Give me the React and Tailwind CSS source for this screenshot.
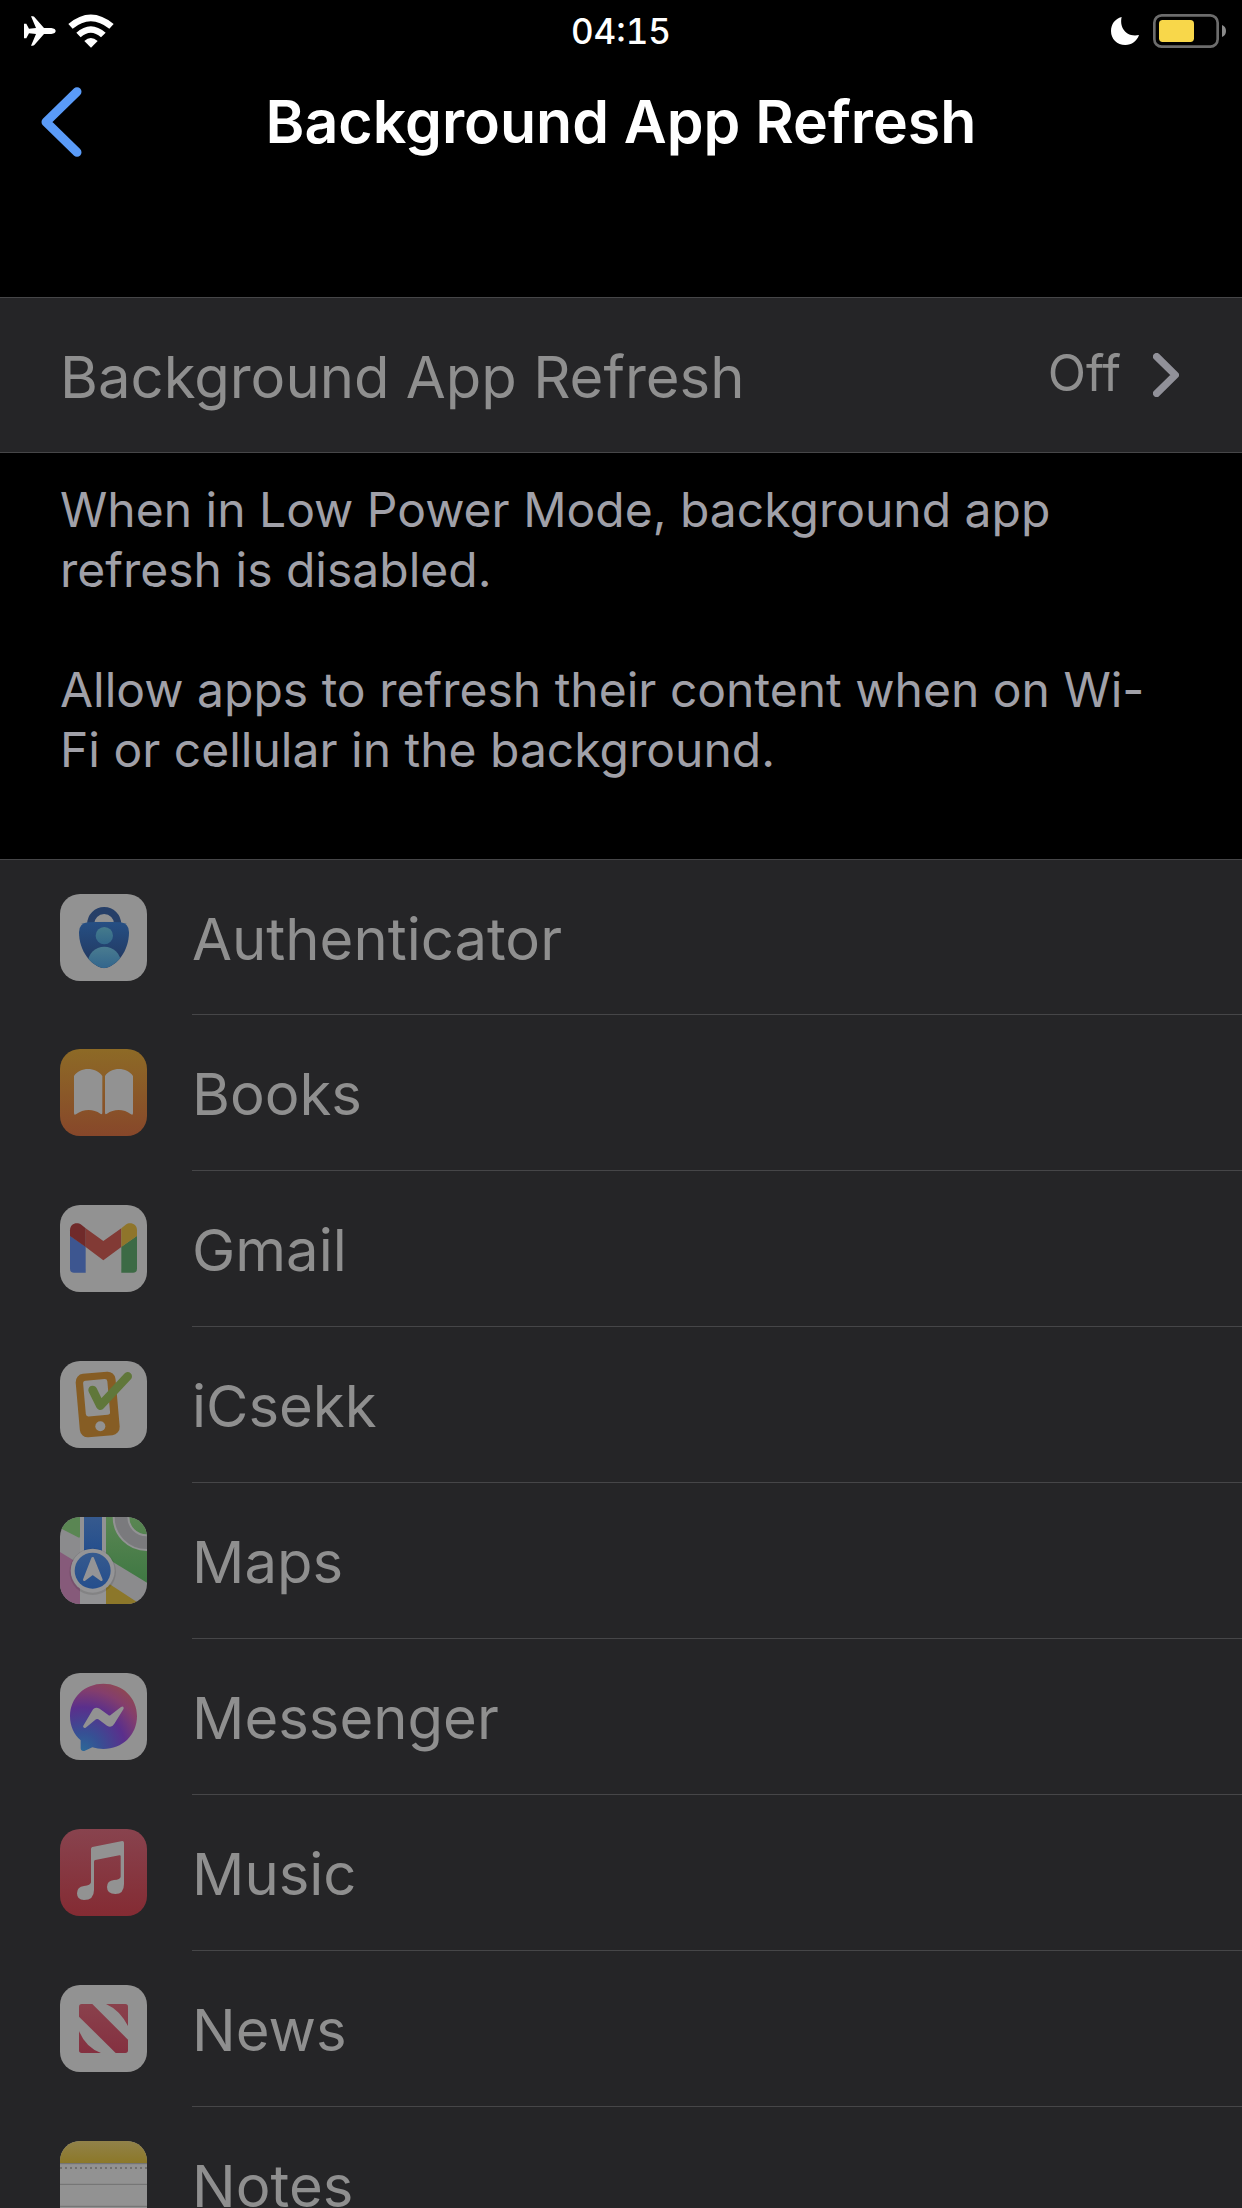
function AuthenticatorIcon() {
    return (
        <>
            <defs>
                <linearGradient id="auth-body" x1="0" y1="0" x2="0" y2="1">
                    <stop offset="0" stopColor="#265085" />
                    <stop offset="0.6" stopColor="#233f6b" />
                    <stop offset="1" stopColor="#203055" />
                </linearGradient>
                <linearGradient id="auth-head" x1="0" y1="0" x2="0" y2="1">
                    <stop offset="0" stopColor="#457b8c" />
                    <stop offset="1" stopColor="#32678a" />
                </linearGradient>
                <linearGradient id="auth-shoulders" gradientUnits="userSpaceOnUse" x1="0" y1="158" x2="0" y2="223">
                    <stop offset="0" stopColor="#4a7c90" />
                    <stop offset="1" stopColor="#32658c" />
                </linearGradient>
                <clipPath id="auth-clip">
                    <path d="M83 85Q132 82 182 85Q207 88 207 115C207 170 172 217 132 223C92 217 57 170 57 115Q57 88 83 85Z" />
                </clipPath>
            </defs>
            <rect width="261" height="261" fill="#929292" />
            <path d="M92 92V90A40 40 0 0 1 173 90V92" fill="none" stroke="#263f68" strokeWidth="21" />
            <g clipPath="url(#auth-clip)">
                <rect x="50" y="80" width="165" height="150" fill="url(#auth-body)" />
                <circle cx="133" cy="125" r="26" fill="url(#auth-head)" />
                <circle cx="133" cy="208" r="50" fill="url(#auth-shoulders)" />
            </g>
        </>
    )
}

function BooksIcon() {
    return (
        <>
            <defs>
                <linearGradient id="books-bg" x1="0" y1="0" x2="0" y2="1">
                    <stop offset="0" stopColor="#8d6a26" />
                    <stop offset="1" stopColor="#87472a" />
                </linearGradient>
            </defs>
            <rect width="261" height="261" fill="url(#books-bg)" />
            <path d="M42 81C60 53 108 53 127 81V191Q127 198 121 194C100 179 70 179 48 196Q42 200 42 192Z" fill="#929292" />
            <path d="M135 81C153 53 201 53 219 81V192Q219 200 213 196C192 179 162 179 141 194Q135 198 135 191Z" fill="#929292" />
        </>
    )
}

function GmailIcon() {
    return (
        <>
            <rect width="261" height="261" fill="#929292" />
            <path d="M30 92L77 125V203H42Q30 203 30 191Z" fill="#3d5690" />
            <path d="M184 125L231 92V191Q231 203 219 203H184Z" fill="#3c6a45" />
            <path d="M77 70L130 108L184 70V126L130 166L77 126Z" fill="#823a35" />
            <path d="M30 93V76C30 56 50 49 64 59L77 70V126Z" fill="#702a2a" />
            <path d="M231 93V76C231 56 210 49 197 59L184 70V126Z" fill="#8f752b" />
        </>
    )
}

function ICsekkIcon() {
    return (
        <>
            <rect width="261" height="261" fill="#929292" />
            <g transform="rotate(-5 113 130)">
                <rect x="53" y="35" width="120" height="191" rx="24" fill="#865d24" />
                <rect x="75" y="56" width="73" height="108" rx="8" fill="#929292" />
            </g>
            <circle cx="121" cy="196" r="15" fill="#929292" />
            <path d="M98 87L121 134L203 46" fill="none" stroke="#60773a" strokeWidth="26" strokeLinecap="round" strokeLinejoin="round" />
        </>
    )
}

function MapsIcon() {
    return (
        <>
            <defs>
                <linearGradient id="maps-green" x1="0" y1="0" x2="0" y2="1">
                    <stop offset="0" stopColor="#5a8653" />
                    <stop offset="1" stopColor="#3f7843" />
                </linearGradient>
                <linearGradient id="maps-blue" x1="0" y1="0" x2="0" y2="1">
                    <stop offset="0" stopColor="#365a8e" />
                    <stop offset="1" stopColor="#244e8d" />
                </linearGradient>
            </defs>
            <rect width="261" height="261" fill="#8b8b8d" />
            <path d="M0 0H60V58Q60 64 54 61L0 33Z" fill="#5a8653" />
            <path d="M138 0H261V197L138 122Z" fill="url(#maps-green)" />
            <path d="M0 105L60 142V261H0Z" fill="#865a7a" />
            <path d="M138 194L232 256V261H138Z" fill="#8c772a" />
            <path d="M60 0H138V261H60Z" fill="#929294" />
            <path d="M72 0H126V110H72Z" fill="url(#maps-blue)" />
            <circle cx="260" cy="0" r="77" fill="none" stroke="#929294" strokeWidth="50" />
            <circle cx="260" cy="0" r="77" fill="none" stroke="#7a7a7d" strokeWidth="38" />
            <circle cx="98" cy="164" r="70" fill="#000" opacity="0.1" />
            <circle cx="98" cy="161" r="66" fill="#949496" />
            <circle cx="98" cy="161" r="54" fill="url(#maps-blue)" />
            <path d="M98 124L124 188L98 169L73 188Z" fill="#949496" stroke="#949496" strokeWidth="8" strokeLinejoin="round" />
        </>
    )
}

function MessengerIcon() {
    return (
        <>
            <defs>
                <radialGradient id="messenger-bg" gradientUnits="userSpaceOnUse" cx="68" cy="232" r="235">
                    <stop offset="0" stopColor="#2c6898" />
                    <stop offset="0.22" stopColor="#365094" />
                    <stop offset="0.55" stopColor="#5a2f8c" />
                    <stop offset="0.78" stopColor="#843e6c" />
                    <stop offset="1" stopColor="#924a4a" />
                </radialGradient>
            </defs>
            <rect width="261" height="261" fill="#929292" />
            <path d="M130 32C74 32 30 73 30 129C30 159 42 184 62 202V226Q63 236 73 234L97 223Q113 228 130 228C187 228 231 186 231 129C231 73 187 32 130 32Z" fill="url(#messenger-bg)" />
            <path d="M69 160L96 114Q104 99 119 107L145 126Q148 129 152 126L183 102Q192 97 191 107L163 152Q155 166 141 158L115 139Q112 137 108 139L77 164Q71 168 69 160Z" fill="#929292" />
        </>
    )
}

function MusicIcon() {
    return (
        <>
            <defs>
                <linearGradient id="music-bg" x1="0" y1="0" x2="0" y2="1">
                    <stop offset="0" stopColor="#88434e" />
                    <stop offset="1" stopColor="#842b33" />
                </linearGradient>
            </defs>
            <rect width="261" height="261" fill="url(#music-bg)" />
            <path d="M97 54L187 36Q192 36 192 41V165Q192 195 166 195Q141 195 141 174Q141 155 162 153Q181 151 182 143V82Q182 78 178 79L106 93Q102 94 102 98V183Q102 213 72 213Q51 213 51 193Q51 173 72 171Q92 169 93 160V60Q93 55 97 54Z" fill="#929292" />
        </>
    )
}

function NewsIcon() {
    return (
        <>
            <defs>
                <linearGradient id="news-red" gradientUnits="userSpaceOnUse" x1="0" y1="57" x2="0" y2="204">
                    <stop offset="0" stopColor="#8a414c" />
                    <stop offset="1" stopColor="#843040" />
                </linearGradient>
            </defs>
            <rect width="261" height="261" fill="#929292" />
            <g fill="url(#news-red)">
                <path d="M65 57H97L204 164V196Q204 204 196 204H167L57 95V65Q57 57 65 57Z" />
                <path d="M138 57H196Q204 57 204 65V123Q179 75 138 57Z" />
                <path d="M57 138Q77 187 123 204H65Q57 204 57 196Z" />
            </g>
        </>
    )
}

function NotesIcon() {
    return (
        <>
            <defs>
                <linearGradient id="notes-top" x1="0" y1="0" x2="0" y2="1">
                    <stop offset="0" stopColor="#91824a" />
                    <stop offset="1" stopColor="#8c7828" />
                </linearGradient>
            </defs>
            <rect width="261" height="261" fill="#929292" />
            <rect width="261" height="66" fill="url(#notes-top)" />
            <path d="M0 68H261M0 130H261M0 196H261" stroke="#707070" strokeWidth="3" />
            <path d="M0 81H261" stroke="#707070" strokeWidth="6" strokeDasharray="6 9" />
        </>
    )
}

const apps = [
    { name: 'Authenticator', Icon: AuthenticatorIcon },
    { name: 'Books', Icon: BooksIcon },
    { name: 'Gmail', Icon: GmailIcon },
    { name: 'iCsekk', Icon: ICsekkIcon },
    { name: 'Maps', Icon: MapsIcon },
    { name: 'Messenger', Icon: MessengerIcon },
    { name: 'Music', Icon: MusicIcon },
    { name: 'News', Icon: NewsIcon },
    { name: 'Notes', Icon: NotesIcon }
]

function StatusBar() {
    return (
        <div className="grid grid-cols-3 items-center h-[62px]">

            {/* CONNECTION */}
            <div className="flex items-center gap-3 pl-6">

                <svg viewBox="0 0 96 90" className="w-8 h-[30px]" fill="#fff" aria-label="Airplane mode">
                    <path d="M60 36H82Q95 38 95 45Q95 52 82 54H60L31 87Q29 89 25 89H21L36 54L15 52L7 67H0V23H7L15 38L36 36L21 1H27Q31 2 33 5Z" />
                </svg>

                <svg viewBox="0 0 138 100" className="w-[46px] h-[34px]" fill="#fff" aria-label="Wi-Fi">
                    <path d="M1 29Q68 -28 137 29L124 43Q68 -2 14 43Z" />
                    <path d="M25 55Q68 16 113 55L99 69Q68 42 38 69Z" />
                    <path d="M49 80Q68 62 89 80L69 100Z" />
                </svg>

            </div>

            <p className="text-center text-[35px] font-medium text-white tabular-nums">04:15</p>

            {/* POWER */}
            <div className="flex items-center justify-end gap-[14px] pr-4">

                <svg viewBox="0 0 84 84" className="size-7" fill="#fff" aria-label="Do not disturb">
                    <path d="M32 0C25 28 42 62 84 54C78 72 62 84 43 84C18 84 0 66 0 42C0 22 12 5 32 0Z" />
                </svg>

                <svg viewBox="0 0 219 102" className="w-[73px] h-[34px]" aria-label="Battery">
                    <rect x="4" y="4" width="190" height="94" rx="22" fill="none" stroke="#6c6c6c" strokeWidth="8" />
                    <rect x="18" y="18" width="105" height="66" rx="11" fill="#f8d74a" />
                    <path d="M207 33Q219 38 219 51Q219 64 207 69Z" fill="#8a8a8a" />
                </svg>

            </div>

        </div>
    )
}

export default function App() {
    return (
        <div className="flex flex-col h-screen overflow-hidden bg-black font-['Inter',sans-serif]">

            <header className="shrink-0 pb-[115px]">

                <StatusBar />

                {/* NAV BAR */}
                <div className="grid grid-cols-[82px_1fr_82px] items-center h-[120px]">

                    <button type="button" aria-label="Back" className="flex justify-end">
                        <svg viewBox="0 0 123 210" className="w-[41px] h-[70px]" fill="none" stroke="#5a9bf8" strokeWidth="27" strokeLinecap="round" strokeLinejoin="round">
                            <path d="M108 14L15 105L108 196" />
                        </svg>
                    </button>

                    <h1 className="text-center text-[59px] font-semibold text-white whitespace-nowrap">
                        Background App Refresh
                    </h1>

                </div>

            </header>

            <main className="shrink-0">

                <button
                    type="button"
                    className="flex w-full h-[156px] items-center justify-between border-y border-[#464648] bg-[#252527] pl-[60px] pr-[63px]"
                >

                    <span className="pt-1 text-[58px] text-[#8f8f8f]">Background App Refresh</span>

                    <span className="flex items-center gap-8">

                        <span className="pb-1 text-[50px] text-[#8f8f8f]">Off</span>

                        <svg viewBox="0 0 78 132" className="w-[26px] h-11" fill="none" stroke="#919199" strokeWidth="22" strokeLinecap="round" strokeLinejoin="round">
                            <path d="M11 11L67 66L11 121" />
                        </svg>

                    </span>

                </button>

                <div className="flex flex-col gap-[60px] px-[60px] pt-[27px] pb-[79px] text-[48px] leading-[60px] text-[#a0a0a8]">

                    <p>When in Low Power Mode, background app refresh is disabled.</p>

                    <p>Allow apps to refresh their content when on Wi-<wbr />Fi or cellular in the background.</p>

                </div>

                {/* APPS */}
                <ul className="bg-[#252527]">

                    {apps.map(({ name, Icon }) => (

                        <li
                            key={name}
                            className="flex h-[156px] items-center gap-[45px] border-[#464648] pl-[60px] first:border-t"
                        >

                            <svg viewBox="0 0 261 261" className="size-[87px] mb-px shrink-0 rounded-[20px]" aria-hidden="true">
                                <Icon />
                            </svg>

                            <span className="flex flex-1 self-stretch items-center border-b border-[#464648] pt-1 text-[58px] text-[#8f8f8f]">
                                {name}
                            </span>

                        </li>
                    ))}

                </ul>

            </main>

        </div>
    )
}
